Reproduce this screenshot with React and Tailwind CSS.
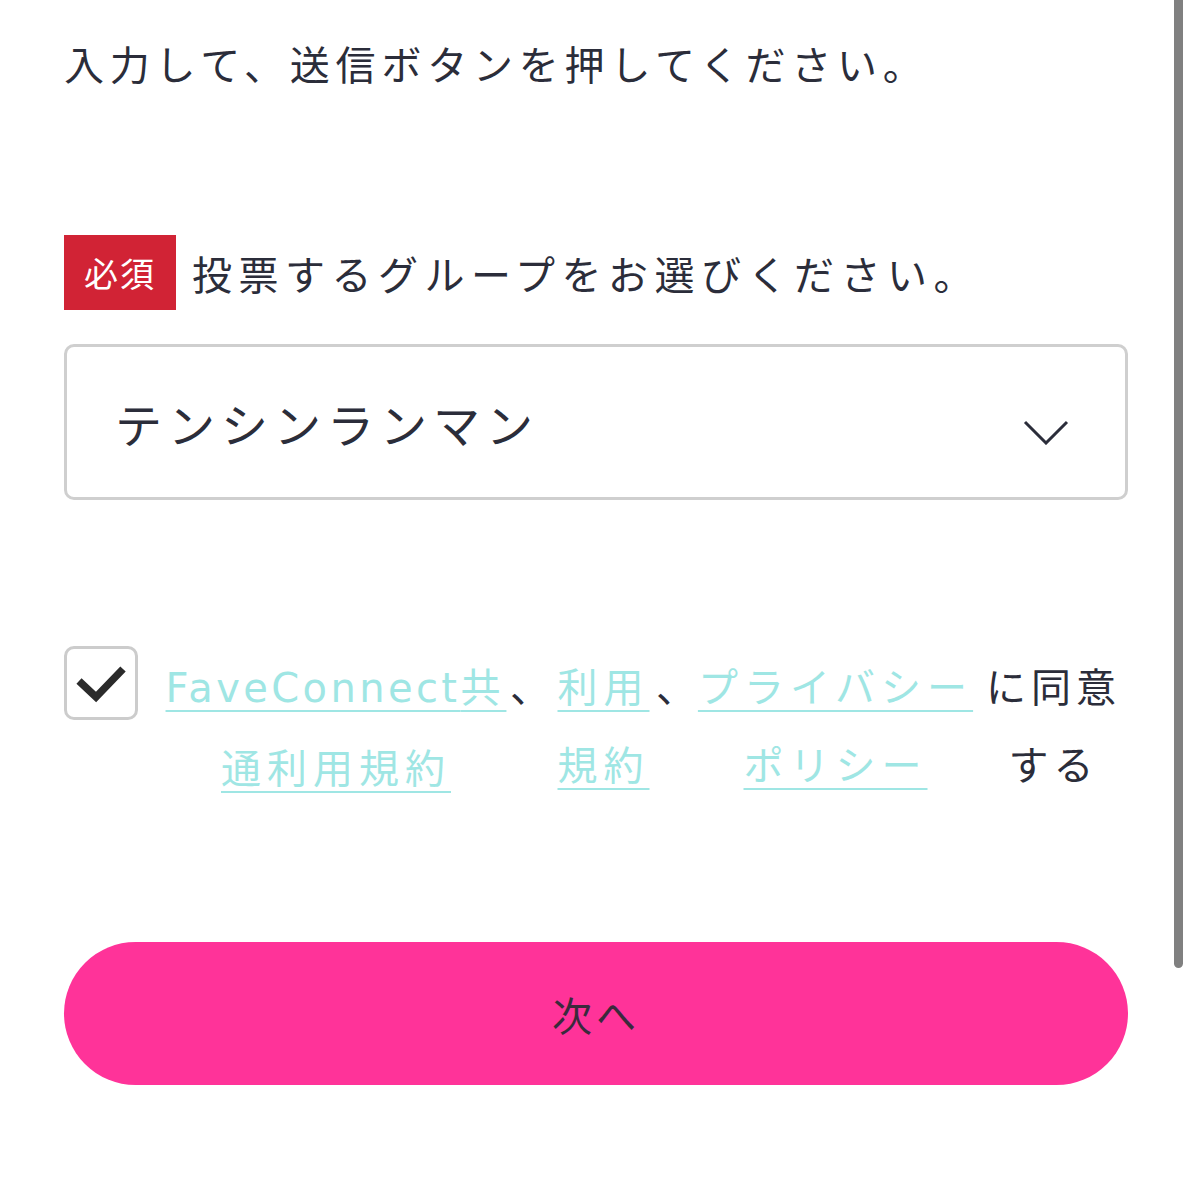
import React, { useState } from 'react';

const FONT = { fontFamily: '"Noto Sans CJK JP", "Noto Sans", sans-serif' };
const LATIN = { fontFamily: '"DejaVu Sans", "Noto Sans CJK JP", sans-serif' };

const App = () => {
    const [agreed, setAgreed] = useState(true);

    return (
        <div className="relative min-h-[1200px] bg-white text-[#2b2d3a]" style={FONT}>
            <div className="px-[64px] pr-[63px] pt-[33px]">
                {/* Intro */}
                <p className="text-[40px] leading-[60px] tracking-[5.8px]">
                    入力して、送信ボタンを押してください。
                </p>

                {/* Group label */}
                <div className="mt-[142px] flex items-center gap-[16px]">
                    <span className="flex h-[75px] w-[112px] items-center justify-center bg-[#d12335] text-[34px] tracking-[2px] text-white">
                        必須
                    </span>
                    <span className="text-[40px] leading-[60px] tracking-[6.5px]">
                        投票するグループをお選びください。
                    </span>
                </div>

                {/* Select */}
                <div className="mt-[34px] flex h-[156px] items-center justify-between rounded-[10px] border-[3px] border-[#cfcfcf] pl-[48px] pr-[56px]">
                    <span className="text-[47px] leading-none tracking-[6px]">テンシンランマン</span>
                    <svg className="mt-[20px]" width="46" height="26" viewBox="0 0 46 26" fill="none">
                        <polyline points="2,3 23,24 44,3" stroke="#2b2d3a" strokeWidth="3" />
                    </svg>
                </div>

                {/* Agreement */}
                <div className="mt-[146px] flex items-start">
                    <button
                        onClick={() => setAgreed(!agreed)}
                        className="flex h-[74px] w-[74px] shrink-0 items-center justify-center rounded-[10px] border-[3px] border-[#cccccc] bg-white"
                    >
                        {agreed && (
                            <svg width="52" height="40" viewBox="0 0 52 40" fill="none">
                                <polyline points="4,18 21,34 48,6" stroke="#2b2b2b" strokeWidth="7.5" />
                            </svg>
                        )}
                    </button>
                    <div className="ml-[26px] flex whitespace-nowrap text-[40px] leading-[78px]">
                        <span className="w-[344px] shrink-0 text-center text-[#9fe6e4] underline decoration-2 underline-offset-[8px] tracking-[6px]">
                            <span className="tracking-[3.4px]" style={LATIN}>FaveConnect</span>共<br />通利用規約
                        </span>
                        <span className="w-[49px] shrink-0 pl-[2px]">、</span>
                        <span className="w-[93px] shrink-0 text-center text-[#9fe6e4] underline decoration-2 underline-offset-[8px] tracking-[6px]">
                            利用<br />規約
                        </span>
                        <span className="w-[46px] shrink-0 pl-[6px]">、</span>
                        <span className="w-[279px] shrink-0 text-center text-[#9fe6e4] underline decoration-2 underline-offset-[8px] tracking-[6px]">
                            プライバシー<br />ポリシー
                        </span>
                        <span className="ml-[10px] w-[137px] shrink-0 text-center tracking-[5px]">
                            に同意<br />する
                        </span>
                    </div>
                </div>

                {/* Next */}
                <button className="mt-[137px] flex h-[143px] w-full items-center justify-center rounded-full bg-[#ff3399] text-[40px] tracking-[4px] text-[#3a2a3c]">
                    次へ
                </button>
            </div>

            {/* Scroll thumb */}
            <div className="absolute right-[8px] top-0 h-[968px] w-[9px] rounded-b-full bg-[#808080]" />
        </div>
    );
};

export default App;
